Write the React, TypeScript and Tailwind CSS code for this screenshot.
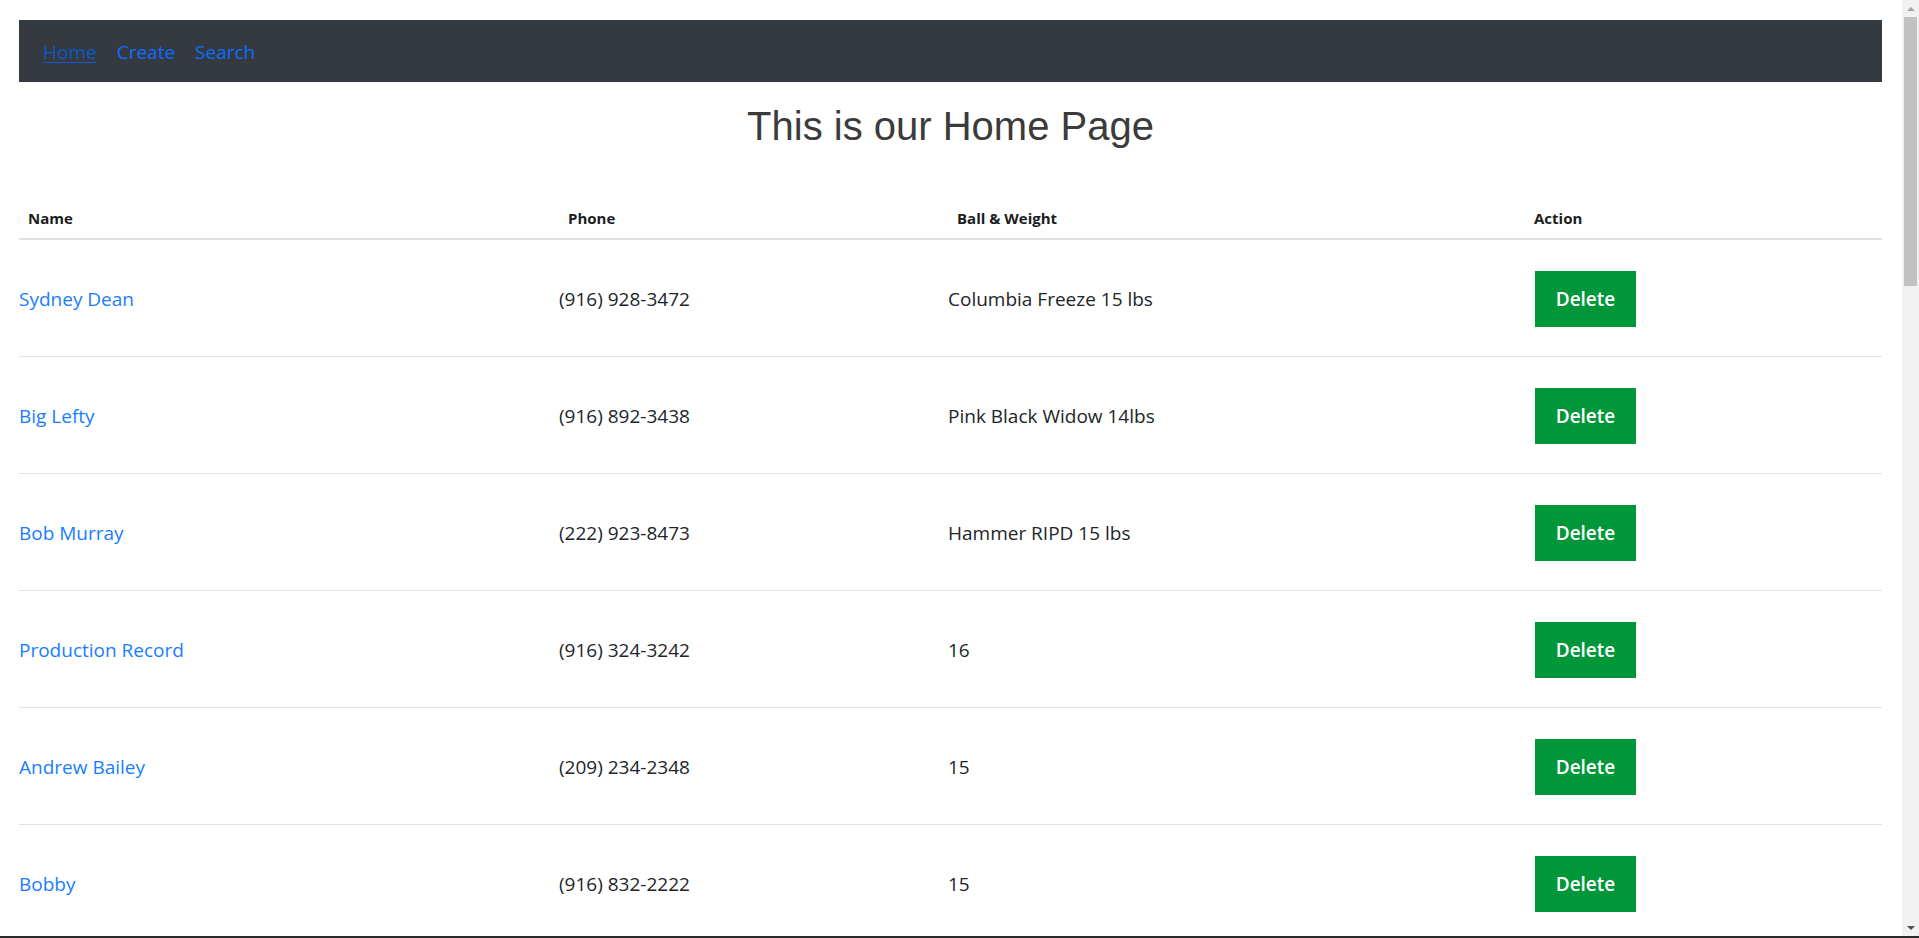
const rows = [
  { name: "Sydney Dean", phone: "(916) 928-3472", ball: "Columbia Freeze 15 lbs" },
  { name: "Big Lefty", phone: "(916) 892-3438", ball: "Pink Black Widow 14lbs" },
  { name: "Bob Murray", phone: "(222) 923-8473", ball: "Hammer RIPD 15 lbs" },
  { name: "Production Record", phone: "(916) 324-3242", ball: "16" },
  { name: "Andrew Bailey", phone: "(209) 234-2348", ball: "15" },
  { name: "Bobby", phone: "(916) 832-2222", ball: "15" },
]

const cols = "grid grid-cols-[540px_389px_577px_1fr]"

function NavBar() {
  return (
    <nav className="flex h-[62px] items-center gap-[20px] bg-[#343a40] pl-[24px] pt-[1px] text-[19px] leading-[30px]">
      <a href="#" className="text-[#0a58ca] underline underline-offset-[3px]">
        Home
      </a>
      <a href="#" className="text-[#0d6efd]">
        Create
      </a>
      <a href="#" className="text-[#0d6efd]">
        Search
      </a>
    </nav>
  )
}

function Scrollbar() {
  return (
    <div className="flex w-[17px] flex-col items-center bg-[#f1f1f1]">
      <div className="flex h-[17px] items-center justify-center">
        <div className="h-0 w-0 border-x-[4px] border-b-[4px] border-x-transparent border-b-[#a3a3a3]" />
      </div>
      <div className="h-[269px] w-[13px] bg-[#c1c1c1]" />
      <div className="flex-1" />
      <div className="flex h-[17px] items-center justify-center">
        <div className="h-0 w-0 border-x-[4px] border-t-[4px] border-x-transparent border-t-[#505050]" />
      </div>
    </div>
  )
}

export default function App() {
  return (
    <div
      className="flex h-[938px] flex-col overflow-hidden bg-white"
      style={{ fontFamily: '"Open Sans", "Noto Sans", sans-serif' }}
    >
      <div className="flex min-h-0 flex-1">
        <main className="min-w-0 flex-1 overflow-hidden pl-[19px] pr-[20px] pt-[20px]">
          <NavBar />
          <h1
            className="mt-[21px] text-center text-[40px] leading-[46px] text-[#3b3b3b]"
            style={{ fontFamily: '"Liberation Sans", Arial, sans-serif' }}
          >
            This is our Home Page
          </h1>

          <div
            className={clsx(
              cols,
              "mt-[58px] border-b-2 border-[#dee2e6] pb-[9px] text-[15px] font-bold leading-[22px] text-[#1b1e21]"
            )}
          >
            <div className="pl-[9px]">Name</div>
            <div className="pl-[9px]">Phone</div>
            <div className="pl-[9px]">Ball &amp; Weight</div>
            <div className="pl-[9px]">Action</div>
          </div>

          {rows.map((row) => (
            <div
              key={row.name}
              className={clsx(
                cols,
                "h-[117px] items-center border-b border-[#dee2e6] pt-[1px] text-[19px] leading-[30px] text-[#212529]"
              )}
            >
              <a href="#" className="text-[#1a7dff]">
                {row.name}
              </a>
              <div>{row.phone}</div>
              <div>{row.ball}</div>
              <div className="pl-[10px]">
                <button className="h-[56px] w-[101px] bg-[#00973a] text-[19px] font-semibold text-white">
                  Delete
                </button>
              </div>
            </div>
          ))}
        </main>
        <Scrollbar />
      </div>
      <div className="h-[2px] bg-[#2b2b2b]" />
    </div>
  )
}

import clsx from "clsx"
